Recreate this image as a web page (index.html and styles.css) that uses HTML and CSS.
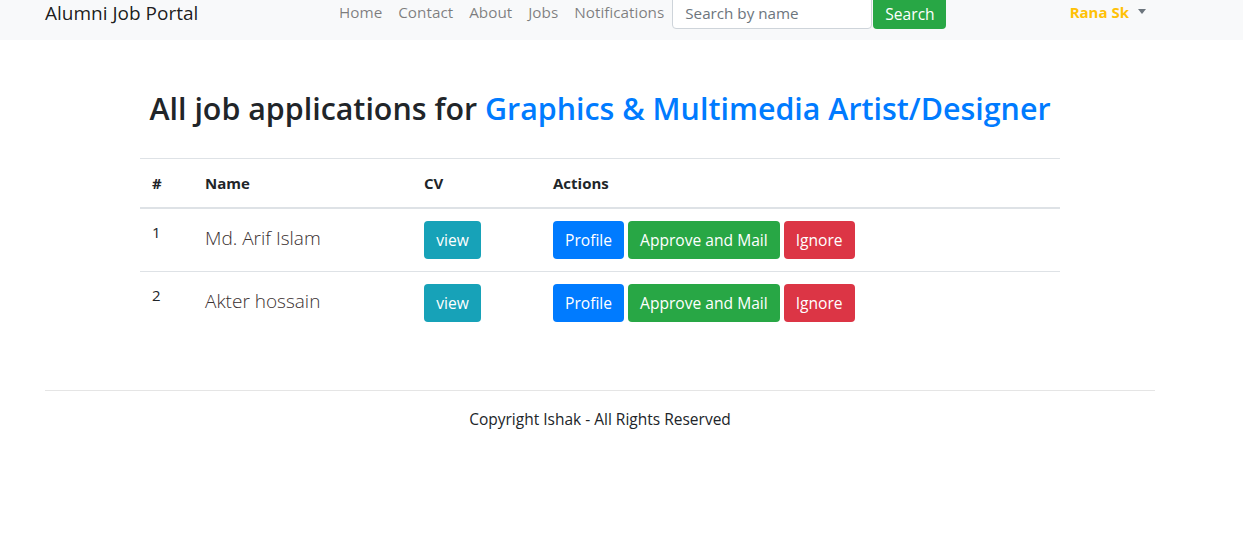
FILE: index.html
```html
<!DOCTYPE html>
<html lang="en">
<head>
<meta charset="utf-8">
<title>Alumni Job Portal</title>
<link rel="stylesheet" href="styles.css">
</head>
<body>
<nav class="navbar">
  <div class="nav-inner">
    <a class="brand" href="#">Alumni Job Portal</a>
    <ul class="nav-links">
      <li><a href="#">Home</a></li>
      <li><a href="#">Contact</a></li>
      <li><a href="#">About</a></li>
      <li><a href="#">Jobs</a></li>
      <li><a href="#">Notifications</a></li>
    </ul>
    <form class="search">
      <input class="search-input" type="text" placeholder="Search by name">
      <button class="btn btn-success search-btn" type="button"><span class="search-label">Search</span></button>
    </form>
    <div class="user">
      <a class="user-link" href="#">Rana Sk</a><span class="caret"></span>
    </div>
  </div>
</nav>

<main class="container">
  <h2 class="title">All job applications for <span class="job">Graphics &amp; Multimedia Artist/Designer</span></h2>
  <div class="table-wrap">
    <table class="table">
      <thead>
        <tr>
          <th class="col-num">#</th>
          <th class="col-name">Name</th>
          <th class="col-cv">CV</th>
          <th>Actions</th>
        </tr>
      </thead>
      <tbody>
        <tr>
          <td>1</td>
          <td><span class="lead">Md. Arif Islam</span></td>
          <td><a class="btn btn-info" href="#">view</a></td>
          <td class="actions"><a class="btn btn-primary" href="#">Profile</a><a class="btn btn-success" href="#">Approve and Mail</a><a class="btn btn-danger" href="#">Ignore</a></td>
        </tr>
        <tr>
          <td>2</td>
          <td><span class="lead">Akter hossain</span></td>
          <td><a class="btn btn-info" href="#">view</a></td>
          <td class="actions"><a class="btn btn-primary" href="#">Profile</a><a class="btn btn-success" href="#">Approve and Mail</a><a class="btn btn-danger" href="#">Ignore</a></td>
        </tr>
      </tbody>
    </table>
  </div>
</main>

<footer class="footer">
  <hr class="rule">
  <p class="copy">Copyright Ishak - All Rights Reserved</p>
</footer>
</body>
</html>
```

FILE: styles.css
```css
* { box-sizing: border-box; }
html, body { margin: 0; padding: 0; }
body {
  font-family: "Open Sans", "Noto Sans", sans-serif;
  font-size: 15px;
  line-height: 1.5;
  color: #212529;
  background: #fff;
  width: 1243px;
}
a { text-decoration: none; }

.navbar {
  background: #f8f9fa;
  height: 40px;
  overflow: hidden;
}
.nav-inner {
  width: 1110px;
  margin-left: 45px;
  margin-top: -9px;
  height: 38px;
  display: flex;
  align-items: center;
}
.brand {
  color: rgba(0,0,0,.9);
  font-size: 19px;
  line-height: 30px;
  padding-top: 6px;
  width: 155px;
}
.nav-links {
  list-style: none;
  display: flex;
  margin: 0 0 0 131px;
  padding: 5px 0 0;
}
.nav-links a {
  display: block;
  color: rgba(0,0,0,.5);
  padding: 0 8px;
  font-size: 15.3px;
}
.search { display: flex; align-items: center; margin-left: 0; }
.search-input {
  width: 200px;
  height: 38px;
  border: 1px solid #ced4da;
  border-radius: 4px;
  padding: 6px 12px 0;
  font: inherit;
  font-size: 15.2px;
  color: #495057;
  background: #fff;
}
.search-input::placeholder { color: #6c757d; }
.search-btn {
  margin-left: 1px;
  height: 38px;
  width: 73px;
  padding: 0;
  display: flex;
  justify-content: center;
  align-items: flex-start;
}
.search-label { display: block; line-height: 24px; margin-top: 7px; }

.user { display: flex; align-items: center; padding-top: 5px; margin-left: auto; margin-right: 9px; }
.user-link { color: #ffc107; font-weight: 700; font-size: 15px; }
.caret {
  margin-left: 9px;
  width: 0; height: 0;
  border-left: 4px solid transparent;
  border-right: 4px solid transparent;
  border-top: 5px solid #6c757d;
  margin-top: -2px;
}

.container { width: 1110px; margin-left: 45px; }
.title {
  margin: 50px 0 30px;
  text-align: center;
  font-size: 30.4px;
  font-weight: 600;
  line-height: 38px;
}
.job { color: #007bff; }

.table-wrap { width: 920px; margin: 0 auto; }
.table { width: 100%; border-collapse: collapse; }
.table th, .table td {
  padding: 12px;
  text-align: left;
  vertical-align: top;
  border-top: 1px solid #dee2e6;
}
.table th { font-weight: 700; font-size: 15px; padding-top: 13px; padding-bottom: 12px; }
.table thead th { border-bottom: 2px solid #dee2e6; }
.table tbody tr:first-child td { border-top: 0; }
.col-num { width: 53px; }
.col-name { width: 219px; }
.col-cv { width: 129px; }
.lead { font-size: 19px; font-weight: 300; line-height: 32px; display: inline-block; padding-top: 1px; color: #3a3030; }

.btn {
  display: inline-block;
  height: 38px;
  padding: 0 12px;
  line-height: 39px;
  font-size: 15.6px;
  border-radius: 4px;
  color: #fff;
  border: 0;
  font-family: inherit;
}
.btn-info { background: #17a2b8; width: 57px; text-align: center; padding: 0; }
.btn-primary { background: #007bff; }
.btn-success { background: #28a745; }
.btn-danger { background: #dc3545; }
.actions .btn + .btn { margin-left: 4px; }

.footer { width: 1110px; margin-left: 45px; margin-top: 56px; }
.rule { margin: 0; border: 0; border-top: 1px solid #e5e5e5; }
.copy { margin: 17px 0 0; text-align: center; font-size: 15.5px; }
```
